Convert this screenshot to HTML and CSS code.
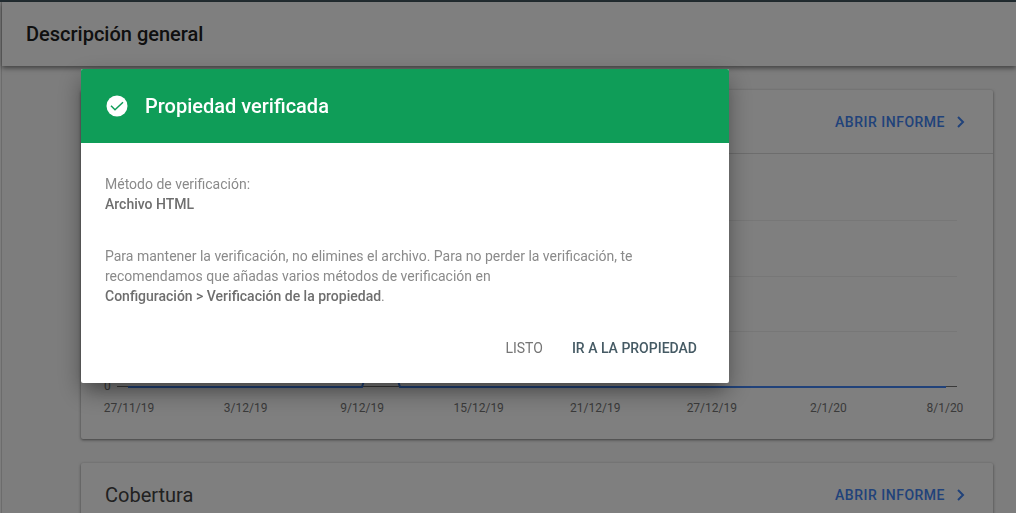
FILE: index.html
```
<!DOCTYPE html>
<html lang="es">
<head>
<meta charset="utf-8">
<meta name="viewport" content="width=device-width, initial-scale=1">
<title>Descripción general</title>
<link rel="stylesheet" href="styles.css">
</head>
<body>
<div class="page">
  <header class="topbar">
    <h1 class="topbar-title">Descripción general</h1>
  </header>
  <main class="content">
    <section class="card">
      <div class="card-head card-head-ruled">
        <a class="report-link" href="#">ABRIR INFORME
          <svg class="chevron" viewBox="0 0 8 12" aria-hidden="true"><path d="M1 1l5 5-5 5"/></svg>
        </a>
      </div>
      <div class="chart">
        <div class="plot-row">
          <span class="axis-zero">0</span>
          <svg class="plot" viewBox="0 0 840 172" preserveAspectRatio="none" aria-hidden="true">
            <path class="grid-line" d="M0 .5H840M0 56.500H840M0 111.500H840"/>
            <path class="base-line" d="M0 166.500H840"/>
            <path class="series" d="M11 167H245L260 120L268 120L283 167H829"/>
          </svg>
        </div>
        <div class="dates">
          <span>27/11/19</span><span>3/12/19</span><span>9/12/19</span><span>15/12/19</span><span>21/12/19</span><span>27/12/19</span><span>2/1/20</span><span>8/1/20</span>
        </div>
      </div>
    </section>
    <section class="card">
      <div class="card-head">
        <h2 class="card-title">Cobertura</h2>
        <a class="report-link" href="#">ABRIR INFORME
          <svg class="chevron" viewBox="0 0 8 12" aria-hidden="true"><path d="M1 1l5 5-5 5"/></svg>
        </a>
      </div>
    </section>
  </main>
</div>
<div class="overlay">
  <div class="dialog" role="dialog" aria-modal="true" aria-labelledby="dialog-title">
    <div class="dialog-head">
      <svg class="check" viewBox="0 0 24 24" aria-hidden="true"><circle cx="12" cy="12" r="10.500" fill="#fff"/><path d="M6 11.800l4 4 8-7.600" fill="none" stroke="#0f9d58" stroke-width="1.500"/></svg>
      <h2 class="dialog-title" id="dialog-title">Propiedad verificada</h2>
    </div>
    <div class="dialog-body">
      <p class="text">Método de verificación:<br><strong>Archivo HTML</strong></p>
      <p class="text">Para mantener la verificación, no elimines el archivo. Para no perder la verificación, te recomendamos que añadas varios métodos de verificación en <br><strong>Configuración &gt; Verificación de la propiedad</strong>.</p>
    </div>
    <div class="actions">
      <button class="button" type="button">LISTO</button>
      <button class="button button-primary" type="button">IR A LA PROPIEDAD</button>
    </div>
  </div>
</div>
</body>
</html>
```
FILE: styles.css
```
* { box-sizing: border-box; }
body {
  margin: 0;
  height: 100vh;
  overflow: hidden;
  background: #fafafa;
  font-family: Roboto, "Liberation Sans", sans-serif;
}
h1, h2, p { margin: 0; }
.page {
  min-height: 100vh;
  border-top: 2px solid #455a64;
  padding-left: 2px;
  background: linear-gradient(to right, #fafafa 1px, #d8d8d8 1px, #d8d8d8 2px, #fafafa 2px);
}
.topbar {
  display: flex;
  align-items: center;
  height: 64px;
  padding: 0 24px;
  background: #fff;
  box-shadow: 0 2px 5px rgba(0, 0, 0, .5);
}
.topbar-title {
  font-size: 20px;
  line-height: 24px;
  font-weight: 500;
  color: #212121;
}
.content {
  display: flex;
  flex-direction: column;
  gap: 24px;
  padding: 24px 23px 0 79px;
}
.card {
  background: #fff;
  border-radius: 2px;
  box-shadow: 0 1px 3px rgba(0, 0, 0, .5);
}
.card-head {
  display: flex;
  align-items: center;
  height: 64px;
  padding: 0 28px 0 24px;
}
.card-head-ruled { border-bottom: 1px solid #dadada; }
.card-title {
  font-size: 20px;
  line-height: 24px;
  font-weight: 400;
  color: #424242;
}
.report-link {
  display: flex;
  align-items: center;
  gap: 12px;
  margin-left: auto;
  font-size: 14px;
  line-height: 20px;
  font-weight: 500;
  letter-spacing: .5px;
  color: #4285f4;
  text-decoration: none;
}
.chevron {
  width: 8px;
  height: 12px;
  fill: none;
  stroke: currentColor;
  stroke-width: 2;
}
.chart { padding: 66px 18px 22px; }
.plot-row {
  display: flex;
  align-items: flex-end;
  gap: 6px;
  padding: 0 18px 0 5px;
}
.axis-zero {
  width: 7px;
  font-size: 12px;
  line-height: 12px;
  color: #757575;
}
.plot {
  flex: 1;
  min-width: 0;
  height: 172px;
  fill: none;
}
.grid-line { stroke: #eee; }
.base-line { stroke: #757575; }
.series { stroke: #4285f4; stroke-width: 2; }
.dates {
  display: flex;
  justify-content: space-between;
  padding-top: 7px;
}
.dates span {
  width: 60px;
  text-align: center;
  font-size: 12px;
  line-height: 18px;
  color: #757575;
}
.overlay {
  position: fixed;
  inset: 0;
  background: rgba(0, 0, 0, .5);
}
.dialog {
  position: absolute;
  top: 69px;
  left: 81px;
  width: 648px;
  max-width: calc(100% - 96px);
  background: #fff;
  border-radius: 2px;
  box-shadow: 0 11px 15px -7px rgba(0, 0, 0, .2), 0 9px 24px 0 rgba(0, 0, 0, .35);
}
.dialog-head {
  display: flex;
  align-items: center;
  gap: 16px;
  height: 74px;
  padding: 0 24px;
  border-radius: 2px 2px 0 0;
  background: #0f9d58;
  color: #fff;
}
.check { width: 24px; height: 24px; }
.dialog-title {
  font-size: 20px;
  line-height: 24px;
  font-weight: 500;
}
.dialog-body {
  display: grid;
  gap: 32px;
  padding: 31px 80px 0 24px;
}
.text {
  font-size: 14px;
  line-height: 20px;
  font-weight: 400;
  color: #8a8a8a;
}
.text strong { font-weight: 500; color: #6e6e6e; }
.actions {
  display: flex;
  justify-content: flex-end;
  gap: 13px;
  padding: 24px 24px 17px;
}
.button {
  height: 36px;
  padding: 0 8px;
  border: 0;
  background: none;
  font-family: inherit;
  font-size: 14px;
  font-weight: 400;
  color: #757575;
}
.button-primary { font-weight: 500; color: #455a64; }
```
